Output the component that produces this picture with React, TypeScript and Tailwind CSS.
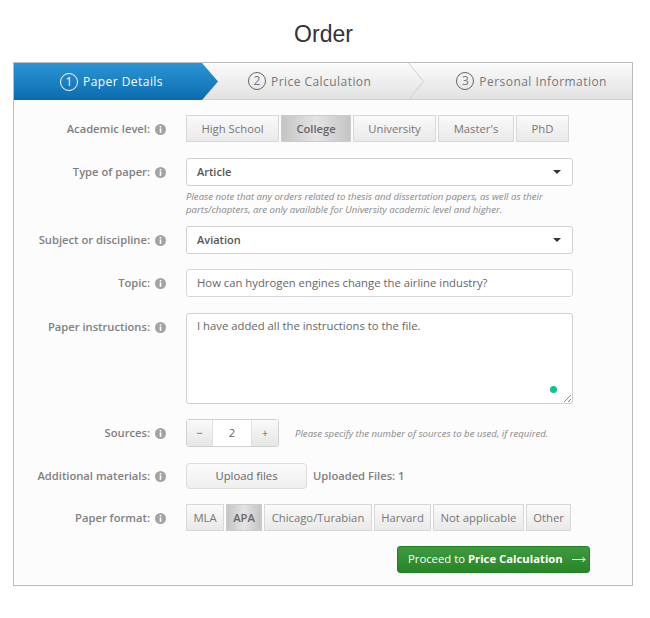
const FONT = "font-['Open_Sans',sans-serif]";

function InfoIcon() {
  return (
    <svg width="11" height="11" viewBox="0 0 11 11" className="shrink-0">
      <circle cx="5.5" cy="5.5" r="5.5" fill="#a3a3a3" />
      <rect x="4.7" y="2" width="1.6" height="1.5" fill="#fff" />
      <rect x="4.7" y="4.4" width="1.6" height="4.4" fill="#fff" />
    </svg>
  );
}

function Caret() {
  return (
    <svg width="8" height="4" viewBox="0 0 8 4" className="shrink-0">
      <path d="M0 0h8L4 4z" fill="#333" />
    </svg>
  );
}

function Row({ label, className, children }: { label: string; className?: string; children: React.ReactNode }) {
  return (
    <div className={`flex ${className ?? ""}`}>
      <div className="w-[152px] flex items-center justify-end gap-[5px] h-[28px] shrink-0 text-[11.2px] font-semibold text-[#808080]">
        <span className="whitespace-nowrap">{label}:</span>
        <InfoIcon />
      </div>
      <div className="ml-[20px] min-w-0">{children}</div>
    </div>
  );
}

function Options({ items, active }: { items: [string, number][]; active: string }) {
  return (
    <div className="flex gap-[2px]">
      {items.map(([name, width]) => (
        <div
          key={name}
          style={{ width }}
          className={
            name === active
              ? "h-[27px] pt-[1px] flex items-center justify-center text-[11.2px] font-semibold text-[#666] border border-[#ccc] bg-gradient-to-r from-[#c4c4c4] via-[#e4e4e4] to-[#c4c4c4]"
              : "h-[27px] pt-[1px] flex items-center justify-center text-[11.3px] text-[#777] border border-[#d8d8d8] bg-gradient-to-b from-[#fafafa] to-[#e9e9e9]"
          }
        >
          {name}
        </div>
      ))}
    </div>
  );
}

function Select({ value }: { value: string }) {
  return (
    <div className="w-[387px] h-[28px] flex items-center justify-between pl-[10px] pr-[11px] bg-white border border-[#d0d0d0] rounded-[3px] text-[11px] font-semibold text-[#555]">
      <span>{value}</span>
      <Caret />
    </div>
  );
}

function Step({ num, title, className, active }: { num: number; title: string; className: string; active?: boolean }) {
  return (
    <div className={`flex items-center tracking-[0.45px] text-[12px] whitespace-nowrap ${active ? "text-white" : "text-[#777]"} ${className}`}>
      <span className={`w-[18px] h-[18px] rounded-full border flex items-center justify-center text-[12px] tracking-normal mr-[5px] ${active ? "border-white" : "border-[#666]"}`}>
        {num}
      </span>
      <span className="pt-[1px]">{title}</span>
    </div>
  );
}

export default function App() {
  return (
    <div className={`${FONT} w-[650px] h-[618px] bg-white`}>
      <h1 className="h-[62px] pt-[20px] pr-[3px] text-center text-[23px] leading-[28px] text-[#333] font-['Liberation_Sans',sans-serif]">
        Order
      </h1>

      <div className="ml-[13px] w-[620px] h-[524px] border border-[#bbb] bg-[#fcfcfc]">
        {/* Steps */}
        <div className="relative flex h-[37px] bg-gradient-to-b from-[#fbfbfb] to-[#e2e2e2] border-b border-[#cfcfcf]">
          <div className="w-[204px] h-[37px] pl-[46px] flex items-center bg-gradient-to-b from-[#2a95d5] to-[#0a6cb0] [clip-path:polygon(0_0,188px_0,204px_50%,188px_100%,0_100%)]">
            <Step num={1} title="Paper Details" active className="" />
          </div>
          <Step num={2} title="Price Calculation" className="ml-[30px]" />
          <svg width="16" height="37" viewBox="0 0 16 37" className="absolute left-[394px] top-0">
            <path d="M0.5 0L15.5 18.5L0.5 37" fill="none" stroke="#cfcfcf" />
          </svg>
          <Step num={3} title="Personal Information" className="ml-[85px]" />
        </div>

        {/* Form */}
        <div className="pt-[15px]">
          <Row label="Academic level">
            <Options
              active="College"
              items={[["High School", 93], ["College", 70], ["University", 83], ["Master's", 76], ["PhD", 53]]}
            />
          </Row>

          <Row label="Type of paper" className="mt-[15px]">
            <Select value="Article" />
            <p className="mt-[4px] w-[380px] text-[9.6px] leading-[13px] italic text-[#888]">
              Please note that any orders related to thesis and dissertation papers, as well as their parts/chapters, are only available for University academic level and higher.
            </p>
          </Row>

          <Row label="Subject or discipline" className="mt-[10px]">
            <Select value="Aviation" />
          </Row>

          <Row label="Topic" className="mt-[15px]">
            <div className="w-[387px] h-[28px] flex items-center pl-[10px] bg-white border border-[#d8d8d8] rounded-[3px] text-[11.3px] text-[#666]">
              How can hydrogen engines change the airline industry?
            </div>
          </Row>

          <Row label="Paper instructions" className="mt-[16px]">
            <div className="relative w-[387px] h-[91px] pl-[10px] pt-[4px] bg-white border border-[#d0d0d0] rounded-[3px] text-[11.3px] text-[#666]">
              I have added all the instructions to the file.
              <span className="absolute right-[15px] bottom-[10px] w-[7px] h-[7px] rounded-full bg-[#10c08e]" />
              <svg width="9" height="9" viewBox="0 0 9 9" className="absolute right-0 bottom-0">
                <path d="M1 8L8 1M5 8L8 5" stroke="#888" strokeWidth="1" />
              </svg>
            </div>
          </Row>

          <Row label="Sources" className="mt-[15px]">
            <div className="flex items-center">
              <div className="flex w-[93px] h-[28px] border border-[#d0d0d0] rounded-[3px] text-[11.3px] text-[#666] overflow-hidden">
                <span className="w-[25px] flex items-center justify-center bg-gradient-to-b from-[#fafafa] to-[#e6e6e6]">−</span>
                <span className="w-[40px] flex items-center justify-center bg-white border-x border-[#e2e2e2]">2</span>
                <span className="w-[26px] flex items-center justify-center bg-gradient-to-b from-[#fafafa] to-[#e6e6e6]">+</span>
              </div>
              <span className="ml-[16px] pt-[2px] text-[9.6px] italic text-[#888] whitespace-nowrap">
                Please specify the number of sources to be used, if required.
              </span>
            </div>
          </Row>

          <Row label="Additional materials" className="mt-[15px]">
            <div className="flex items-center h-[28px]">
              <div className="w-[121px] h-[26px] flex items-center justify-center border border-[#dcdcdc] rounded-[4px] bg-gradient-to-b from-[#fbfbfb] to-[#efefef] text-[11.3px] text-[#666]">
                Upload files
              </div>
              <span className="ml-[6px] text-[11.2px] font-semibold text-[#808080]">Uploaded Files: 1</span>
            </div>
          </Row>

          <Row label="Paper format" className="mt-[14px]">
            <Options
              active="APA"
              items={[["MLA", 38], ["APA", 36], ["Chicago/Turabian", 108], ["Harvard", 57], ["Not applicable", 91], ["Other", 45]]}
            />
          </Row>

          <div className="flex justify-end mt-[14px] mr-[42px]">
            <div className="w-[193px] h-[27px] flex items-center pl-[10px] rounded-[3px] border border-[#257f25] bg-gradient-to-b from-[#3f9a3f] to-[#268526] text-[11.3px] text-white whitespace-nowrap">
              Proceed to&nbsp;<b className="font-bold">Price Calculation</b>
              <svg width="14" height="7" viewBox="0 0 14 7" className="ml-[9px]">
                <path d="M0 3.5H13M10.5 1L13 3.5L10.5 6" fill="none" stroke="#fff" />
              </svg>
            </div>
          </div>
        </div>
      </div>
    </div>
  );
}
